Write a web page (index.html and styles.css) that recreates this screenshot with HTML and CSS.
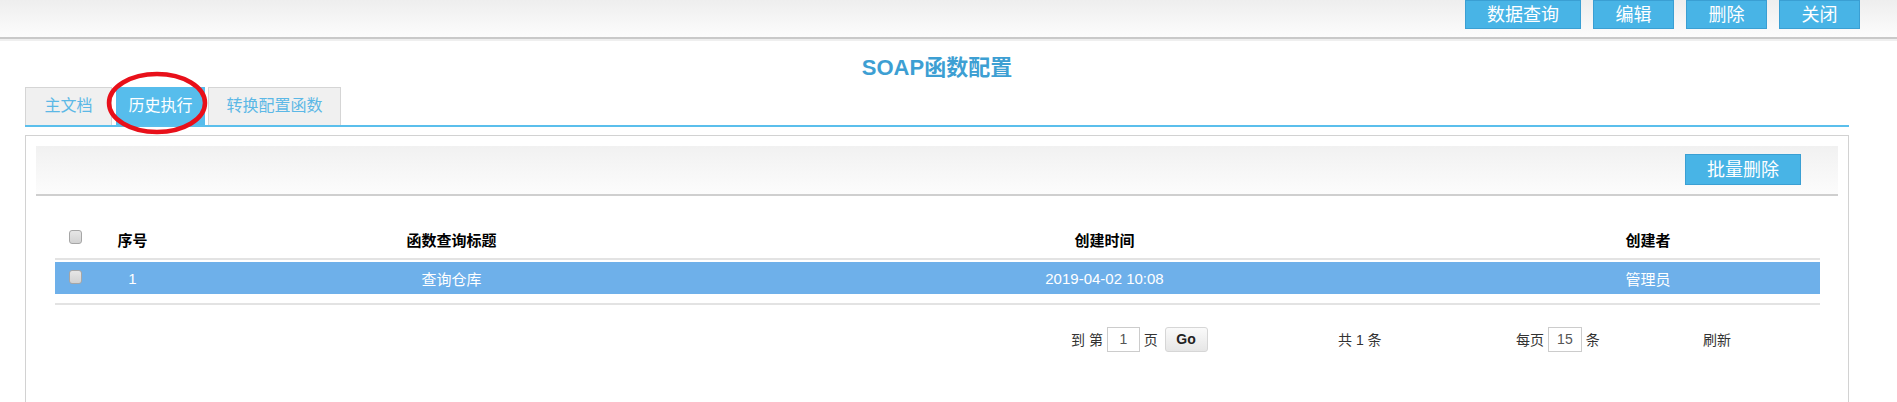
FILE: index.html
```html
<!DOCTYPE html>
<html lang="zh-CN">
<head>
<meta charset="utf-8">
<title>SOAP函数配置</title>
<link rel="stylesheet" href="styles.css">
</head>
<body>
<div class="topbar">
  <button class="btn btn-top btn-wide">数据查询</button>
  <button class="btn btn-top">编辑</button>
  <button class="btn btn-top">删除</button>
  <button class="btn btn-top">关闭</button>
</div>
<div class="main">
  <h1 class="title">SOAP函数配置</h1>
  <div class="tabs">
    <div class="tab tab-1">主文档</div>
    <div class="tab tab-2 active">历史执行</div>
    <div class="tab tab-3">转换配置函数</div>
    <svg class="mark" width="104" height="66" viewBox="0 0 104 66"><ellipse cx="52" cy="33" rx="48" ry="29" fill="none" stroke="#e8101a" stroke-width="4.5"/></svg>
  </div>
  <div class="panel">
    <div class="toolbar">
      <button class="btn btn-batch">批量删除</button>
    </div>
    <div class="grid">
      <div class="row head">
        <div class="cell"><span class="chk"></span></div>
        <div class="cell">序号</div>
        <div class="cell">函数查询标题</div>
        <div class="cell">创建时间</div>
        <div class="cell">创建者</div>
      </div>
      <div class="row data">
        <div class="cell"><span class="chk"></span></div>
        <div class="cell">1</div>
        <div class="cell">查询仓库</div>
        <div class="cell">2019-04-02 10:08</div>
        <div class="cell">管理员</div>
      </div>
      <div class="row-end"></div>
    </div>
    <div class="pager">
      <div class="pg pg-go">到 第 <span class="pinput">1</span> 页 <span class="gobtn">Go</span></div>
      <div class="pg pg-total">共 1 条</div>
      <div class="pg pg-size">每页 <span class="pinput pinput-wide">15</span> 条</div>
      <div class="pg pg-refresh">刷新</div>
    </div>
  </div>
</div>
</body>
</html>
```
FILE: styles.css
```css
* { box-sizing: border-box; }
html, body { margin: 0; padding: 0; background: #fff; }
body {
  font-family: "Liberation Sans", "Noto Sans CJK SC", sans-serif;
  color: #333;
  overflow: hidden;
  height: 402px;
}
.topbar {
  height: 39px;
  background: linear-gradient(#eeeeee, #fcfcfc);
  border-bottom: 2px solid #c9c9c9;
  box-shadow: 0 2px 0 #efefef;
  display: flex;
  justify-content: flex-end;
  align-items: flex-start;
  gap: 12px;
  padding-right: 37px;
}
.btn {
  font-family: inherit;
  background: #48b4e6;
  border: 1px solid #3a9fd3;
  color: #fff;
  padding: 0;
  margin: 0;
  cursor: pointer;
}
.btn-top {
  width: 81px;
  height: 29px;
  font-size: 18px;
  line-height: 26px;
}
.btn-wide { width: 116px; }
.main {
  padding: 0 48px 0 25px;
}
.title {
  margin: 16px 0 6px;
  height: 26px;
  font-size: 22px;
  line-height: 26px;
  font-weight: bold;
  color: #3d9fd3;
  text-align: center;
}
.tabs {
  position: relative;
  display: flex;
  align-items: flex-end;
  height: 40px;
  border-bottom: 2px solid #5bbfec;
}
.tab {
  height: 38px;
  background: #f0f0f0;
  border: 1px solid #d5d5d5;
  border-bottom: none;
  color: #5cb8e6;
  font-size: 16px;
  line-height: 36px;
  text-align: center;
}
.tab-1 { width: 87px; margin-right: 4px; }
.tab-2 { width: 89px; margin-right: 3px; }
.tab-3 { width: 133px; }
.tab.active {
  background: #57bdec;
  border-color: #57bdec;
  color: #fff;
}
.mark {
  position: absolute;
  left: 80px;
  top: -17px;
}
.panel {
  margin-top: 8px;
  border: 1px solid #d2d2d2;
  border-bottom: none;
  height: 280px;
  padding: 10px 10px 0;
}
.toolbar {
  height: 50px;
  background: linear-gradient(#f1f1f1, #fcfcfc);
  border-bottom: 2px solid #cfcfcf;
  display: flex;
  justify-content: flex-end;
  align-items: flex-start;
  padding: 8px 37px 0 0;
}
.btn-batch {
  width: 116px;
  height: 31px;
  font-size: 18px;
  line-height: 28px;
}
.grid {
  margin: 27px 18px 0 19px;
}
.row {
  display: grid;
  grid-template-columns: 40px 75px 563px 743px 344px;
  align-items: center;
}
.cell {
  text-align: center;
  font-size: 15px;
}
.head {
  height: 37px;
  border-bottom: 2px solid #e3e3e3;
  color: #000;
  font-weight: bold;
  padding-bottom: 2px;
}
.data {
  margin-top: 2px;
  height: 32px;
  background: #6eb0ea;
  color: #fff;
}
.row-end {
  margin-top: 9px;
  border-top: 2px solid #e3e3e3;
}
.chk {
  display: inline-block;
  width: 13px;
  height: 14px;
  border: 1px solid #a6a6a6;
  border-radius: 3px;
  background: linear-gradient(#e6e6e6, #d2d2d2);
  vertical-align: middle;
}
.head .chk { position: relative; top: -4px; }
.data .chk { position: relative; top: -3px; }
.pager {
  display: flex;
  align-items: center;
  margin-top: 21px;
  padding-left: 1035px;
  height: 26px;
  font-size: 14px;
  color: #333;
}
.pg { display: flex; align-items: center; white-space: pre; }
.pg-go { width: 267px; }
.pg-total { width: 178px; }
.pg-size { width: 187px; }
.pinput {
  display: inline-block;
  width: 33px;
  height: 25px;
  border: 1px solid #cccccc;
  text-align: center;
  line-height: 23px;
  color: #555;
  font-size: 14px;
}
.pinput-wide { width: 34px; }
.gobtn {
  display: inline-block;
  width: 43px;
  height: 25px;
  border: 1px solid #d6d6d6;
  border-radius: 3px;
  background: linear-gradient(#fafafa, #e6e6e6);
  text-align: center;
  line-height: 23px;
  font-weight: bold;
  font-size: 14px;
  color: #222;
  margin-left: 3px;
}
```
